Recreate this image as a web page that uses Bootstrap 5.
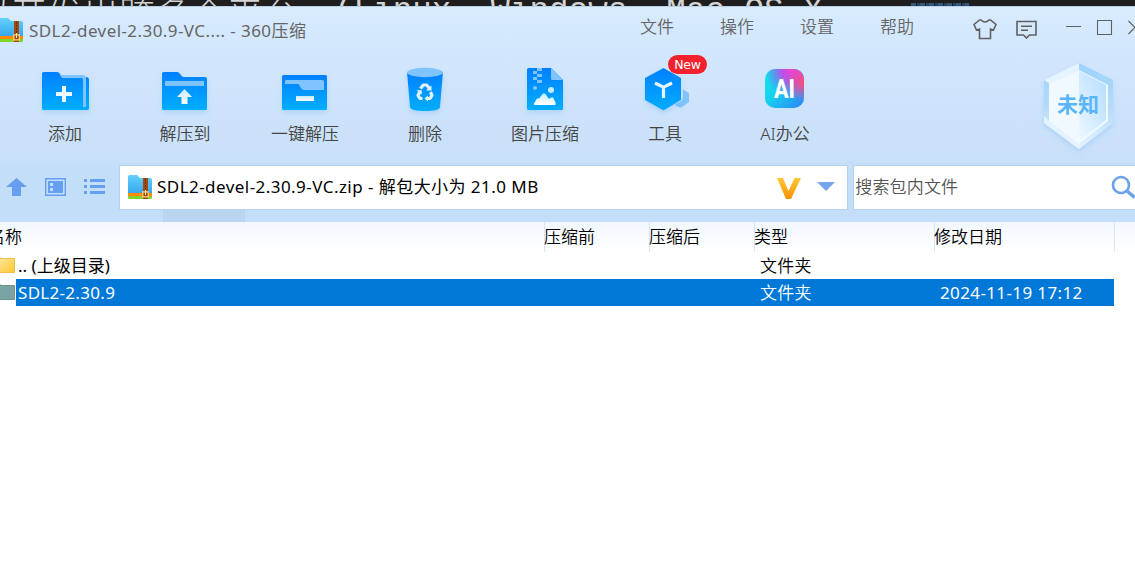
<!DOCTYPE html>
<html lang="zh-CN">
<head>
<meta charset="utf-8">
<meta name="viewport" content="width=device-width, initial-scale=1">
<title>360压缩</title>
<link href="https://cdn.jsdelivr.net/npm/bootstrap@5.3.0/dist/css/bootstrap.min.css" rel="stylesheet">
<style>
body{font-family:"Noto Sans","Noto Sans CJK SC",sans-serif;font-size:17px;font-weight:350;line-height:27px;color:#000;background:#fff;height:100vh;overflow:hidden;white-space:nowrap}
svg{display:block;flex:none}
.backdrop-strip{height:6px;background:#1e1e1e;color:#d4d4d4;line-height:40px;overflow:hidden}
.backdrop-strip .han{font:300 36px/40px "Noto Sans CJK SC",sans-serif;width:335px;margin-left:-25px;margin-top:-8px}
.backdrop-strip .mono{font:32.6px/40px "Liberation Mono",monospace;margin-top:-8px;width:577px}
.tiny-code{width:58px;height:3px;margin-top:3px;background:repeating-linear-gradient(90deg,#31587a 0 5px,#1e1e1e 5px 6px,#28435c 6px 9px)}
.chrome-top{height:216px;background:linear-gradient(#d8ebff 0,#d2e7fd 45px,#cde3fb 100px,#c9e0f8 150px,#c3def9 165px,#c3def9 100%);border-top:1px solid #b9cfea}
.title-row{height:45px;color:#666}
.title-name{width:611px;padding-left:6px;padding-top:10px;font-weight:400;letter-spacing:.43px}
.menu-list{padding-top:6px;margin-left:6px}
.menu-cell{width:80px}
.tools{height:102px;padding-left:5px;padding-top:8px}
.tool{width:120px;color:#444;line-height:20px}
.tool .cap{margin-top:4px}
.new-tag{left:63px;top:-5px;width:39px;height:19px;border-radius:10px;background:#f5222d;color:#fff;font:12.5px/19px "DejaVu Sans",sans-serif;letter-spacing:-.2px;text-align:center}
.addr-row{height:68px;padding-top:11px}
.addr-box{width:730px;height:45px;border:1px solid #b5d1f0;background:#fff;line-height:42px;font-weight:400;letter-spacing:.45px}
.find-box{width:282px;height:45px;border:1px solid #b5d1f0;border-right:0;background:#fff;color:#555;margin-left:5px;line-height:42px;padding-left:1px;letter-spacing:.15px}
.shade-tab{width:82px;height:12px;margin-left:163px;background:#bad5ef}
.lat{letter-spacing:.3px}
.grid-head{height:30px;line-height:30px;background:linear-gradient(#f2f8ff,#fff)}
.grid-head .sep{border-left:1px solid #d5e8fb;text-indent:-1px}
.c-name{width:544px}.c-a{width:105px}.c-b{width:105px}.c-type{width:180px}.c-date{width:180px}
.entry{height:27px}
.entry .c-name{width:738px;padding-left:2px;font-weight:400}
.entry.chosen .fill{background:#0078d7;color:#fff}
.when{padding-left:6px;font-weight:400;letter-spacing:.38px}
.fill{width:1098px}
</style>
</head>
<body>
<div class="backdrop-strip d-flex">
  <div class="han flex-shrink-0">以开发出跨多个平台</div>
  <div class="mono flex-shrink-0 ms-4">(Linux, Windows, Mac OS X</div>
  <div class="tiny-code flex-shrink-0"></div>
</div>
<div class="chrome-top">
  <div class="title-row d-flex">
    <svg width="23" height="45" viewBox="0 7 23 45">
      <use href="#zip" x="-129" y="-157"/>
    </svg>
    <div class="title-name">SDL2-devel-2.30.9-VC.... - 360压缩</div>
    <div class="menu-list d-flex">
      <div class="menu-cell">文件</div><div class="menu-cell">操作</div><div class="menu-cell">设置</div><div class="menu-cell">帮助</div>
    </div>
    <svg width="175" height="45" viewBox="960 7 175 45" fill="none" stroke="#606060" stroke-width="1.6">
      <path d="M979.5 20 974 24.5l2.5 5.5 3-1v9.5h11V29l3 1 2.500-5.500L990.500 20h-1.500q-4 4-8 0z"/>
      <path d="M1017 21.500h19v13.500h-6.500l-3 3-3-3h-6.500zM1021 26.300h11M1021 30.300h7"/>
      <path d="M1066 26.500h15M1097.500 20.500h14v14h-14zM1128.500 21l6.500 6.500-6.500 6.500" stroke-width="1.100"/>
    </svg>
  </div>
  <div class="tools d-flex">
    <div class="tool text-center">
      <svg width="120" height="60" viewBox="5 60 120 60">
        <defs>
          <linearGradient id="bl" x2="0" y2="1"><stop stop-color="#0080ff"/><stop offset="1" stop-color="#00aeff"/></linearGradient>
          <linearGradient id="wh" x2="0" y2="1"><stop stop-color="#c5eaff"/><stop offset="1" stop-color="#fff"/></linearGradient>
          <linearGradient id="sky" x2="0" y2="1"><stop stop-color="#63d0fa"/><stop offset="1" stop-color="#36a6ee"/></linearGradient>
          <filter id="sh" x="-20%" y="-20%" width="140%" height="150%"><feDropShadow dx="0" dy="3" stdDeviation="2.500" flood-color="#5aa4f5" flood-opacity=".25"/></filter>
          <g id="zip">
            <path d="M128 177q0-2 2-2h7l3 3h10q2 0 2 2v14h-24z" fill="url(#sky)"/>
            <path fill="#ff8a00" d="M128 193h24v3h-24z"/><path fill="#83d32f" d="M128 196h24v1.500q0 1.500-1.500 1.500h-21q-1.500 0-1.500-1.500z"/>
            <path fill="#a24b0d" d="M143 178h5v21h-5z"/><path d="M145.500 179v13" stroke="#5c2500" stroke-dasharray="1.500 1.500"/>
            <path d="M142.800 191.800h5.500v5h-5.500z" fill="#a24b0d" stroke="#ffd680" stroke-width="1.200"/><path d="M145.500 190v5" stroke="#ffe9b0"/>
          </g>
        </defs>
        <g filter="url(#sh)"><path fill="url(#bl)" d="M42 73.500q0-1.500 1.500-1.500H57q2 0 3 2l2 3h24q3 0 3 3v28.500q0 1.500-1.500 1.500h-44q-1.500 0-1.500-1.500z"/></g>
        <path fill="#7fc4ff" d="M60 75h23q3 0 3 4v28h-3V80q0-2-2-2H62z"/>
        <path d="M56 94h16M64 86v16" stroke="#eefaff" stroke-width="4"/>
      </svg><div class="cap">添加</div></div>
    <div class="tool text-center">
      <svg width="120" height="60" viewBox="125 60 120 60">
        <path filter="url(#sh)" fill="url(#bl)" d="M162 73.500q0-1.500 1.500-1.500H177q2 0 3 2l3 3h22q2 0 2 2v29.500q0 1.500-1.500 1.500h-42q-1.500 0-1.500-1.500z"/>
        <path fill="#7fc4ff" d="M165 81h39v5h-39z"/><path fill="url(#wh)" d="m184.500 89 7.500 8h-4.500v7h-6v-7H177z"/>
      </svg><div class="cap">解压到</div></div>
    <div class="tool text-center">
      <svg width="120" height="60" viewBox="245 60 120 60">
        <rect filter="url(#sh)" fill="url(#bl)" x="282" y="75" width="45" height="35" rx="1.500"/>
        <path fill="#7fc4ff" d="M285 81.500q0-1.500 1.500-1.500H322q2 0 2 2v8h-20q-2 0-3-2l-2.500-4H285z"/><path fill="url(#wh)" d="M296 96h18v5h-18z"/>
      </svg><div class="cap">一键解压</div></div>
    <div class="tool text-center">
      <svg width="120" height="60" viewBox="365 60 120 60">
        <path filter="url(#sh)" fill="url(#bl)" d="M407 72h36l-3 35q-.5 4-15 4t-15-4z"/><ellipse cx="425" cy="72.500" rx="18" ry="4.700" fill="#7fc4ff"/>
        <g fill="none" stroke="#dff4ff" stroke-width="3.200" stroke-linejoin="round"><path d="m420.500 88.500 2.800-3.500h3.400l2.800 3.500"/><path d="M430.500 92l1.500 3.300-2 3.200h-3.700M422.500 98.500h-2.500l-2-3.200 1.700-3.300"/></g>
        <path fill="#dff4ff" d="M431.500 85.500v5h-5.500zM428 95.500v6l-3.500-3zM416.500 90.500l5-.5.500 4.500z"/>
      </svg><div class="cap">删除</div></div>
    <div class="tool text-center">
      <svg width="120" height="60" viewBox="485 60 120 60">
        <path filter="url(#sh)" fill="url(#bl)" d="M527 69.500q0-1.500 1.500-1.500H551l12 12v28.500q0 1.500-1.500 1.500h-33q-1.500 0-1.500-1.500z"/>
        <path fill="#7fc4ff" d="M551 68l12 12h-10.500q-1.500 0-1.500-1.500zM533 71h4v3h-4zM537 68h5v3h-5zM537 74h5v3h-5zM533 77h4v3h-4zM537 80h5v3h-5z"/><circle cx="535" cy="88" r="2" fill="#7fc4ff"/>
        <circle cx="551" cy="90" r="3" fill="#c5eaff"/><path fill="url(#wh)" d="M534 105v-1.500l3-5h2l4-5h2l4 5.500 2-1.500h2l2.500 5v2.500z"/>
      </svg><div class="cap">图片压缩</div></div>
    <div class="tool text-center position-relative">
      <svg width="120" height="60" viewBox="605 60 120 60">
        <path fill="#7fc4ff" d="M683 89.500l6 3.500v9l-7.500 5.500q-4.500 0-6.500-3l5-2.500q3-2 3-5z"/>
        <path filter="url(#sh)" fill="url(#bl)" d="M663.500 68 681 78v22l-17.500 10.500L645 100V78z"/>
        <path fill="none" stroke="#e5f6ff" stroke-width="3.200" d="M655 83l6 3q2.500 1.500 5 0l6-3M663.500 86.500V98"/>
      </svg><span class="new-tag position-absolute">New</span><div class="cap">工具</div></div>
    <div class="tool text-center">
      <svg width="120" height="60" viewBox="725 60 120 60">
        <defs>
          <linearGradient id="ai1" x2="1" y2="1"><stop stop-color="#16e7ed"/><stop offset=".45" stop-color="#16d0ee"/><stop offset="1" stop-color="#2c83f7"/></linearGradient>
          <radialGradient id="ai2" cx=".72" cy="0" r=".75"><stop stop-color="#ee43cf"/><stop offset=".4" stop-color="#bb50e8"/><stop offset="1" stop-color="#6070f6" stop-opacity="0"/></radialGradient>
          <radialGradient id="ai3" cx="1" cy=".35" r=".5"><stop stop-color="#ff4a6f"/><stop offset="1" stop-color="#ff4a9f" stop-opacity="0"/></radialGradient>
        </defs>
        <g><rect x="765" y="69" width="39" height="39" rx="10" fill="url(#ai1)"/><rect x="765" y="69" width="39" height="39" rx="10" fill="url(#ai2)"/><rect x="765" y="69" width="39" height="39" rx="10" fill="url(#ai3)"/></g>
        <text x="784.500" y="98" text-anchor="middle" font-family="Roboto,sans-serif" font-weight="800" font-size="25" textLength="21" lengthAdjust="spacingAndGlyphs" fill="#fff">AI</text>
      </svg><div class="cap">AI办公</div></div>
    <svg class="ms-auto" width="105" height="102" viewBox="1030 60 105 102">
      <defs><linearGradient id="h1" x2="0" y2="1"><stop stop-color="#9bd3fd"/><stop offset=".5" stop-color="#b3dafa"/><stop offset="1" stop-color="#e4f4ff"/></linearGradient>
      <linearGradient id="h2" x1="1" y1="0" x2="0" y2="1"><stop stop-color="#b2dcff"/><stop offset="1" stop-color="#eef8ff"/></linearGradient></defs>
      <path filter="url(#sh)" fill="url(#h1)" d="M1079 63l34 17v43l-34 26-35-26V80z"/>
      <path fill="#e5f4ff" d="M1079 63v7l-29 14-6-4z"/><path fill="#e4f3ff" d="M1049 121l30 22v6l-35-26v-7z"/>
      <path fill="#f0f9ff" d="M1079 70l29 15v36l-29 23-30-23V84z"/><path fill="url(#h2)" d="M1079 71l27 14v35l-27 21z"/>
      <text x="1078" y="112" text-anchor="middle" font-family="'Noto Sans CJK SC',sans-serif" font-weight="700" font-size="21" fill="#59b5f8">未知</text>
    </svg>
  </div>
  <div class="addr-row">
    <div class="d-flex">
      <svg width="119" height="45" viewBox="0 165 119 45" fill="#679ff0">
        <path d="M16.500 178 27 187h-6v9h-9v-9H6z"/>
        <path d="M45.700 178.700h19.600v16.600H45.700z" fill="none" stroke="#679ff0" stroke-width="1.400"/><path fill-rule="evenodd" d="M48 181h15v12H48zm2 2v3h3v-3zm0 5v3h3v-3z"/>
        <path d="M84 179h3v3h-3zM90 179h15v3H90zM84 185h3v3h-3zM90 185h15v3H90zM84 191h3v3h-3zM90 191h15v3H90z"/>
      </svg>
      <div class="addr-box d-flex">
        <svg width="37" height="43" viewBox="120 166 37 43"><use href="#zip"/></svg>
        <span>SDL2-devel-2.30.9-VC.zip - 解包大小为 21.0 MB</span>
        <svg class="ms-auto" width="77" height="43" viewBox="770 166 77 43"><defs><linearGradient id="vg" x2="0" y2="1"><stop stop-color="#ffc83a"/><stop offset="1" stop-color="#ff9000"/></linearGradient></defs>
          <path fill="url(#vg)" d="M777 178h6l5.500 13 6-13h6.500l-10 21h-5z"/><path fill="#76a5ec" d="M817 182h18l-9 9z"/></svg>
      </div>
      <div class="find-box d-flex"><span>搜索包内文件</span>
        <svg class="ms-auto" width="25" height="43" viewBox="1110 166 25 43" fill="none" stroke="#6da1eb" stroke-width="2.600"><circle cx="1121" cy="185" r="8"/><path d="M1126.500 190.500l8 7" stroke-width="3.500"/></svg>
      </div>
    </div>
    <div class="shade-tab"></div>
  </div>
</div>
<div class="grid-head d-flex">
  <div class="c-name" style="text-indent:-12px">名称</div><div class="c-a sep">压缩前</div><div class="c-b sep">压缩后</div><div class="c-type sep">类型</div><div class="c-date sep">修改日期</div><div class="sep flex-fill"></div>
</div>
<div class="entry d-flex">
  <svg width="16" height="27" viewBox="0 252 16 27"><defs><linearGradient id="fy" x2="1" y2="1"><stop stop-color="#ffe69b"/><stop offset="1" stop-color="#ffc832"/></linearGradient></defs><path fill="#f1b52c" d="M0 257.500l2 .5v2h-2z"/><path fill="url(#fy)" stroke="#f0bd45" d="M-2 258.500h16.500v14H-2z"/></svg>
  <div class="fill d-flex"><div class="c-name">.. (上级目录)</div><div class="c-type ps-1 lat">&#8202;文件夹</div></div>
</div>
<div class="entry chosen d-flex">
  <svg width="16" height="27" viewBox="0 279 16 27"><path fill="#807f35" d="M0 284.500l2 .5v2h-2z"/><path fill="#7aa3a3" stroke="#70938a" d="M-2 285.500h16.500v14H-2z"/></svg>
  <div class="fill d-flex"><div class="c-name lat">SDL2-2.30.9</div><div class="c-type ps-1 lat">&#8202;文件夹</div><span class="when">2024-11-19 17:12</span></div>
</div>
<script src="https://cdn.jsdelivr.net/npm/bootstrap@5.3.0/dist/js/bootstrap.bundle.min.js"></script>
</body>
</html>
